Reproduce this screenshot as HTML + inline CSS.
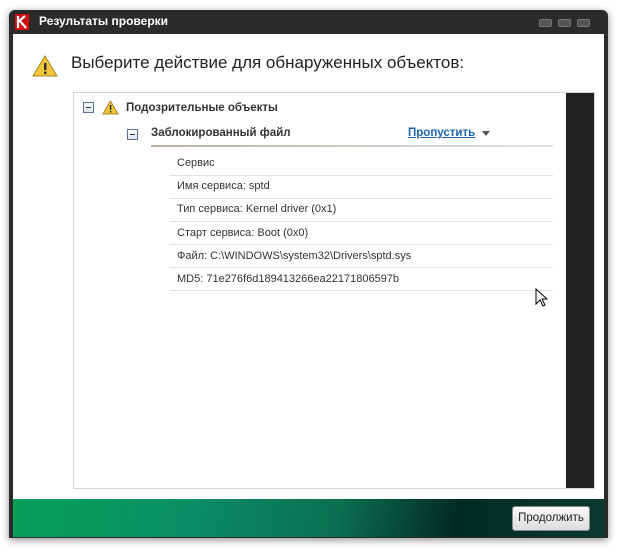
<!DOCTYPE html><html><head><style>
body{margin:0;width:617px;height:554px;background:#fff;position:relative;overflow:hidden;font-family:"Liberation Sans",sans-serif}
.win{position:absolute;left:9px;top:10px;width:599px;height:528px;background:#2b2b2b;border-radius:6px 6px 0 0;box-shadow:0 2px 8px rgba(0,0,0,.45)}
.title{position:absolute;left:30px;top:4px;color:#fff;font-size:12px;font-weight:bold;line-height:14px}
.btn{position:absolute;top:9px;width:11px;height:6px;background:#555;border-radius:2px;border:1px solid #777}
.content{position:absolute;left:13px;top:34px;width:591px;height:465px;background:#fff}
.foot{position:absolute;left:13px;top:499px;width:591px;height:38px;background:linear-gradient(100deg,#06a058 0%,#0a8e66 30%,#0b6f50 55%,#022a22 75%,#0a3a30 100%)}
.panel{position:absolute;left:73px;top:92px;width:520px;height:395px;border:1px solid #cfd8d8;background:#fff}
.scroll{position:absolute;left:566px;top:93px;width:28px;height:395px;background:#222}
.t{position:absolute;font-size:11px;color:#333;white-space:nowrap}
.sep{position:absolute;left:170px;width:383px;height:1px;background:#dde2e2}
.box{position:absolute;width:9px;height:9px;border:1px solid #5a7090;background:linear-gradient(#fff,#dde4ee)}
.box:after{content:"";position:absolute;left:2px;top:4px;width:5px;height:1px;background:#234}
</style></head><body>
<div class="win">
<svg style="position:absolute;left:6px;top:4px" width="14" height="16"><rect width="14" height="16" fill="#d01010"/><path d="M3 2v12M3 8l7-6M5 7l6 7" stroke="#fff" stroke-width="2.2" fill="none"/></svg>
<div class="title">Результаты проверки</div>
<div class="btn" style="left:530px"></div><div class="btn" style="left:549px"></div><div class="btn" style="left:568px"></div>
</div>
<div class="content"></div>
<svg style="position:absolute;left:32px;top:54px" width="26" height="24"><path d="M13 2L25 22H1Z" fill="#f3c73a" stroke="#a88420"/><rect x="12" y="9" width="2.5" height="7" fill="#333"/><rect x="12" y="17.5" width="2.5" height="2.5" fill="#333"/></svg>
<div class="t" style="left:71px;top:53px;font-size:17px;color:#222">Выберите действие для обнаруженных объектов:</div>
<div class="panel"></div><div class="scroll"></div>
<div class="box" style="left:83px;top:102px"></div>
<svg style="position:absolute;left:102px;top:100px" width="17" height="15"><path d="M8.5 1L16 14H1Z" fill="#f3c73a" stroke="#a88420"/><rect x="7.8" y="5" width="1.6" height="5" fill="#333"/><rect x="7.8" y="11" width="1.6" height="1.6" fill="#333"/></svg>
<div class="t" style="left:126px;top:102px;font-weight:bold;font-size:11.5px">Подозрительные объекты</div>
<div class="box" style="left:127px;top:129px"></div>
<div class="t" style="left:151px;top:127px;font-weight:bold;font-size:11.5px">Заблокированный файл</div>
<div class="t" style="left:408px;top:127px;font-weight:bold;font-size:11.5px;color:#1a62b0;text-decoration:underline">Пропустить</div>
<div style="position:absolute;left:482px;top:131px;border:4px solid transparent;border-top:5px solid #555"></div>
<div style="position:absolute;left:151px;top:145px;width:402px;height:2px;background:linear-gradient(90deg,#b8b0a0,#dfe3e0)"></div>
<div class="t" style="left:177px;top:157px">Сервис</div><div class="sep" style="top:175px"></div>
<div class="t" style="left:177px;top:180px">Имя сервиса: sptd</div><div class="sep" style="top:198px"></div>
<div class="t" style="left:177px;top:203px">Тип сервиса: Kernel driver (0x1)</div><div class="sep" style="top:221px"></div>
<div class="t" style="left:177px;top:227px">Старт сервиса: Boot (0x0)</div><div class="sep" style="top:244px"></div>
<div class="t" style="left:177px;top:250px">Файл: C:\WINDOWS\system32\Drivers\sptd.sys</div><div class="sep" style="top:267px"></div>
<div class="t" style="left:177px;top:273px">MD5: 71e276f6d189413266ea22171806597b</div><div class="sep" style="top:290px"></div>
<svg style="position:absolute;left:535px;top:288px" width="13" height="20"><path d="M1 1v15l4-4 3 6 2-1-3-6h5Z" fill="#fff" stroke="#000"/></svg>
<div class="foot"></div>
<div style="position:absolute;left:512px;top:506px;width:76px;height:23px;border:1px solid #8a8a8a;border-radius:3px;background:linear-gradient(#fafafa,#dcdcdc);font-size:11.5px;color:#222;text-align:center;line-height:23px">Продолжить</div>
</body></html>
